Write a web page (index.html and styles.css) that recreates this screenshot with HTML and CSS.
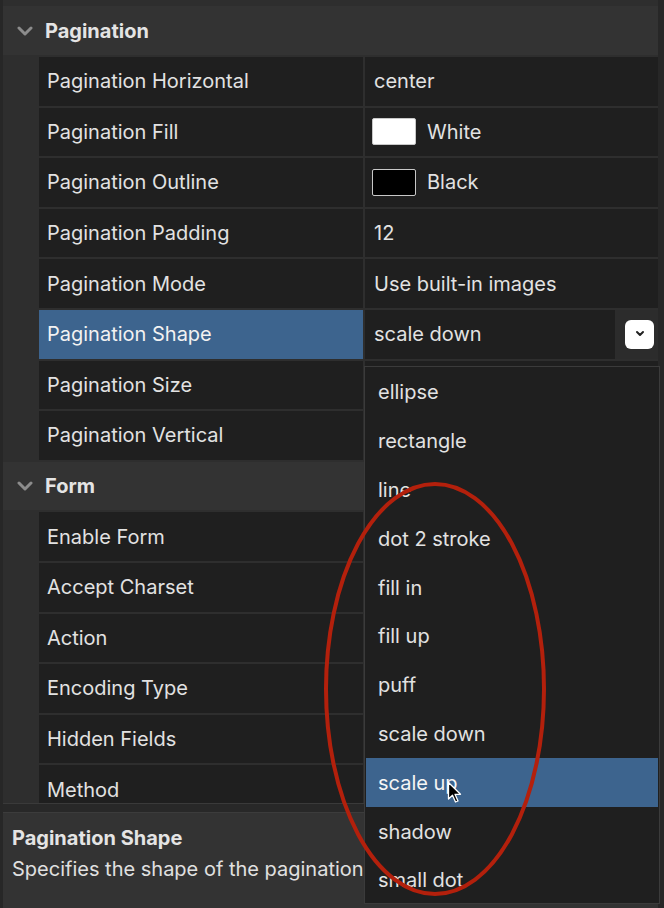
FILE: index.html
```html
<!DOCTYPE html>
<html>
<head>
<meta charset="utf-8">
<link rel="stylesheet" href="styles.css">
</head>
<body>
<div class="app">
  <div class="scroll">
    <div class="section-header">
      <svg class="chev" width="16" height="10" viewBox="0 0 16 10"><path d="M2 2 L8 8 L14 2" fill="none" stroke="#8c8c8c" stroke-width="3" stroke-linecap="round" stroke-linejoin="round"/></svg>
      <span>Pagination</span>
    </div>
    <div class="row"><div class="label">Pagination Horizontal</div><div class="value">center</div></div>
    <div class="row"><div class="label">Pagination Fill</div><div class="value"><span class="swatch swatch-white"></span>White</div></div>
    <div class="row"><div class="label">Pagination Outline</div><div class="value"><span class="swatch swatch-black"></span>Black</div></div>
    <div class="row"><div class="label">Pagination Padding</div><div class="value">12</div></div>
    <div class="row"><div class="label">Pagination Mode</div><div class="value">Use built-in images</div></div>
    <div class="row selected"><div class="label">Pagination Shape</div><div class="value popup"><div class="field">scale down</div><div class="btn-area"><div class="btn"><svg width="12" height="8" viewBox="0 0 12 8"><path d="M3 2 L6 5 L9 2" fill="none" stroke="#222" stroke-width="2" stroke-linecap="round" stroke-linejoin="round"/></svg></div></div></div></div>
    <div class="row"><div class="label">Pagination Size</div><div class="value"></div></div>
    <div class="row"><div class="label">Pagination Vertical</div><div class="value"></div></div>
    <div class="section-header">
      <svg class="chev" width="16" height="10" viewBox="0 0 16 10"><path d="M2 2 L8 8 L14 2" fill="none" stroke="#8c8c8c" stroke-width="3" stroke-linecap="round" stroke-linejoin="round"/></svg>
      <span>Form</span>
    </div>
    <div class="row"><div class="label">Enable Form</div><div class="value"></div></div>
    <div class="row"><div class="label">Accept Charset</div><div class="value"></div></div>
    <div class="row"><div class="label">Action</div><div class="value"></div></div>
    <div class="row"><div class="label">Encoding Type</div><div class="value"></div></div>
    <div class="row"><div class="label">Hidden Fields</div><div class="value"></div></div>
    <div class="row"><div class="label">Method</div><div class="value"></div></div>
  </div>
  <div class="divider"></div>
  <div class="desc">
    <div class="desc-title">Pagination Shape</div>
    <div class="desc-text">Specifies the shape of the pagination</div>
  </div>

  <div class="dropdown">
    <div class="item">ellipse</div>
    <div class="item">rectangle</div>
    <div class="item">line</div>
    <div class="item">dot 2 stroke</div>
    <div class="item">fill in</div>
    <div class="item">fill up</div>
    <div class="item">puff</div>
    <div class="item">scale down</div>
    <div class="item active">scale up</div>
    <div class="item">shadow</div>
    <div class="item">small dot</div>
  </div>

  <svg class="annotation" width="664" height="908" viewBox="0 0 664 908">
    <ellipse cx="435" cy="689" rx="109" ry="205" fill="none" stroke="#b3200c" stroke-width="4"/>
  </svg>

  <svg class="cursor" width="16" height="24" viewBox="0 0 16 24">
    <path d="M1.5 1.5 L1.5 18 L5.5 14.2 L8.5 21 L11 20 L8 13.3 L13.5 13.3 Z" fill="#000" stroke="#fff" stroke-width="1.3" stroke-linejoin="round"/>
  </svg>
</div>
</body>
</html>
```
FILE: styles.css
```css
* { box-sizing: border-box; }

body {
  margin: 0;
  background: #272727;
  font-family: Inter, "Noto Sans", "DejaVu Sans", sans-serif;
  font-size: 20px;
  color: #e2e2e2;
}

.app {
  position: relative;
  width: 664px;
  height: 908px;
  overflow: hidden;
  background: #272727;
}

.scroll {
  height: 803px;
  width: 655px;
  margin-left: 3px;
  overflow: hidden;
  background: #2e2e2e;
  padding-top: 6.4px;
  display: flex;
  flex-direction: column;
  gap: 2px;
}

.section-header {
  flex: 0 0 48.6px;
  height: 48.6px;
  background: #333333;
  display: flex;
  align-items: center;
  padding-left: 14px;
  gap: 12px;
  font-weight: 700;
  color: #e4e4e4;
}

.row {
  flex: 0 0 48.6px;
  height: 48.6px;
  margin-left: 36px;
  display: grid;
  grid-template-columns: 324px 1fr;
  gap: 2px;
}

.label,
.value {
  background: #1f1f1f;
  display: flex;
  align-items: center;
  white-space: nowrap;
}

.label { padding-left: 8px; }
.value { padding-left: 9px; }

.selected .label {
  background: #3d648e;
  color: #f2f2f2;
}

.value.popup {
  padding-left: 0;
  background: #2c2c2c;
  display: flex;
  align-items: stretch;
}

.field {
  flex: 1;
  background: #1f1f1f;
  display: flex;
  align-items: center;
  padding-left: 9px;
}

.btn-area {
  width: 43px;
  display: flex;
  align-items: center;
  padding-left: 10px;
}

.btn {
  width: 29px;
  height: 29px;
  background: #ffffff;
  border-radius: 6px;
  display: flex;
  align-items: center;
  justify-content: center;
}

.swatch {
  width: 44px;
  height: 27px;
  border-radius: 2px;
  margin-left: -2px;
  margin-right: 11px;
  border: 1px solid #c8c8c8;
}

.swatch-white { background: #ffffff; }
.swatch-black { background: #000000; }

.divider {
  height: 10px;
  background: #282828;
  border-top: 1px solid #3a3a3a;
  border-bottom: 1px solid #3c3c3c;
  margin-left: 3px;
  width: 655px;
}

.desc {
  height: 95px;
  margin-left: 3px;
  width: 655px;
  background: #333333;
  padding: 12px 9px 0;
  line-height: 26px;
  white-space: nowrap;
}

.desc-title {
  font-weight: 700;
  color: #e4e4e4;
  margin-bottom: 5px;
}

.desc-text { color: #e0e0e0; }

.dropdown {
  position: absolute;
  left: 364px;
  top: 366px;
  width: 296px;
  height: 538px;
  background: #1f1f1f;
  border: 1px solid #3b3b3b;
  padding: 1px;
}

.item {
  height: 48.8px;
  display: flex;
  align-items: center;
  padding-left: 12px;
  color: #e2e2e2;
}

.item.active {
  background: #3d648e;
  color: #f5f5f5;
}

.annotation {
  position: absolute;
  left: 0;
  top: 0;
  pointer-events: none;
}

.cursor {
  position: absolute;
  left: 447px;
  top: 781px;
}
```
